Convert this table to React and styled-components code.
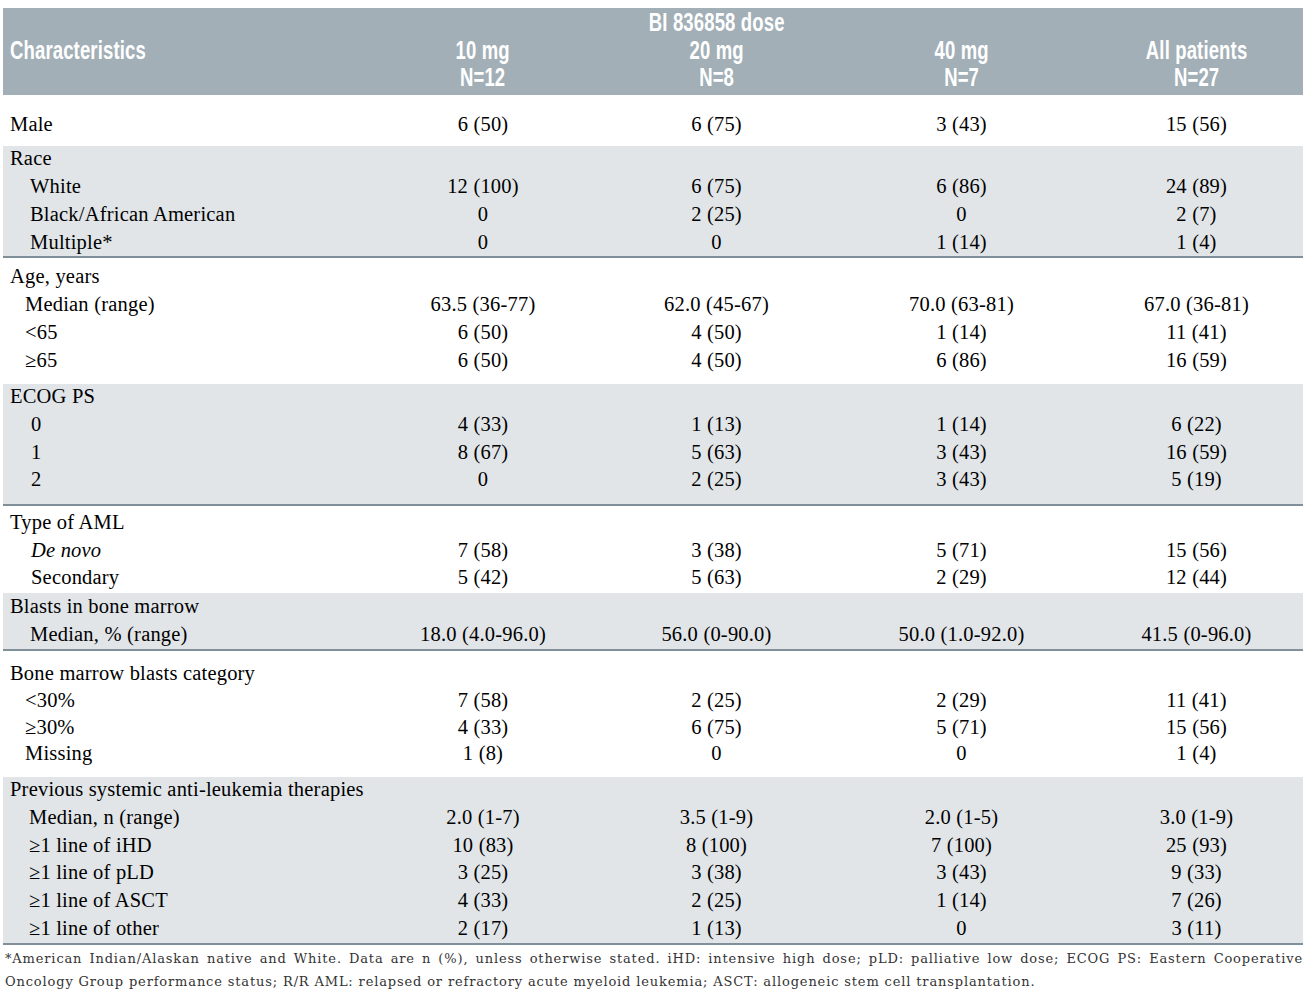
import React from "react";
import styled, { createGlobalStyle } from "styled-components";

const GlobalStyle = createGlobalStyle`
  html, body {
    margin: 0;
    padding: 0;
    background: #fff;
  }
`;

const COLS = "363px 234px 233px 257px 213px";

const Page = styled.div`
  width: 1300px;
  margin: 8px 0 0 3px;
  font-family: "Liberation Serif", "Times New Roman", serif;
  color: #000;
`;

const Head = styled.div`
  display: grid;
  grid-template-columns: ${COLS};
  grid-template-rows: repeat(3, 27.5px);
  height: 87px;
  box-sizing: border-box;
  padding-top: 1px;
  background: #a2afb7;
  color: #fff;
  font-family: "Liberation Sans Narrow", "Arial Narrow", "Liberation Sans", sans-serif;
  font-weight: bold;
  font-size: 25px;
  line-height: 27.5px;
`;

const HeadCell = styled.div`
  grid-column: ${(p) => p.$col + 1};
  grid-row: ${(p) => p.$row};
  text-align: ${(p) => (p.$col === 0 ? "left" : "center")};
  padding-left: ${(p) => (p.$col === 0 ? "7px" : "0")};
  white-space: nowrap;
`;

/* the installed sans has no condensed cut, so squeeze it to the narrow face */
const Narrow = styled.span`
  display: inline-block;
  transform: scaleX(0.74);
  transform-origin: ${(p) => (p.$left ? "left" : "center")} center;
  letter-spacing: 0.2px;
`;

const Group = styled.div`
  height: ${(p) => p.$h}px;
  box-sizing: border-box;
  padding-top: ${(p) => p.$pt}px;
  background: ${(p) => (p.$shade ? "#e1e5e8" : "#fff")};
  border-bottom: ${(p) => (p.$shade ? "2px solid #7f909b" : "none")};
  overflow: hidden;
`;

const Row = styled.div`
  display: grid;
  grid-template-columns: ${COLS};
  height: ${(p) => p.$pitch}px;
  font-size: 20.5px;
  line-height: 24px;
  letter-spacing: 0.2px;
`;

const Label = styled.div`
  padding-left: ${(p) => 7 + p.$indent}px;
  font-style: ${(p) => (p.$italic ? "italic" : "normal")};
  white-space: nowrap;
`;

const Value = styled.div`
  text-align: center;
  white-space: nowrap;
`;

const Note = styled.p`
  margin: 0;
  padding: 3px 0 0 2px;
  font-family: "DejaVu Serif", serif;
  font-size: 13px;
  letter-spacing: 0.85px;
  line-height: 22.7px;
  color: #333;
  text-align: justify;
`;

const groups = [
  {
    h: 51, pt: 17, pitch: 28,
    rows: [{ label: "Male", vals: ["6 (50)", "6 (75)", "3 (43)", "15 (56)"] }],
  },
  {
    shade: true, h: 112, pt: 0, pitch: 28, indent: 20,
    rows: [
      { label: "Race", top: true },
      { label: "White", vals: ["12 (100)", "6 (75)", "6 (86)", "24 (89)"] },
      { label: "Black/African American", vals: ["0", "2 (25)", "0", "2 (7)"] },
      { label: "Multiple*", vals: ["0", "0", "1 (14)", "1 (4)"] },
    ],
  },
  {
    h: 126, pt: 6, pitch: 28, indent: 15,
    rows: [
      { label: "Age, years", top: true },
      { label: "Median (range)", vals: ["63.5 (36-77)", "62.0 (45-67)", "70.0 (63-81)", "67.0 (36-81)"] },
      { label: "<65", vals: ["6 (50)", "4 (50)", "1 (14)", "11 (41)"] },
      { label: "≥65", vals: ["6 (50)", "4 (50)", "6 (86)", "16 (59)"] },
    ],
  },
  {
    shade: true, h: 122, pt: 0, pitch: 27.8, indent: 21,
    rows: [
      { label: "ECOG PS", top: true },
      { label: "0", vals: ["4 (33)", "1 (13)", "1 (14)", "6 (22)"] },
      { label: "1", vals: ["8 (67)", "5 (63)", "3 (43)", "16 (59)"] },
      { label: "2", vals: ["0", "2 (25)", "3 (43)", "5 (19)"] },
    ],
  },
  {
    h: 87, pt: 4, pitch: 27.5, indent: 21,
    rows: [
      { label: "Type of AML", top: true },
      { label: "De novo", italic: true, vals: ["7 (58)", "3 (38)", "5 (71)", "15 (56)"] },
      { label: "Secondary", vals: ["5 (42)", "5 (63)", "2 (29)", "12 (44)"] },
    ],
  },
  {
    shade: true, h: 58, pt: 1, pitch: 27.7, indent: 20,
    rows: [
      { label: "Blasts in bone marrow", top: true },
      { label: "Median, % (range)", vals: ["18.0 (4.0-96.0)", "56.0 (0-90.0)", "50.0 (1.0-92.0)", "41.5 (0-96.0)"] },
    ],
  },
  {
    h: 126, pt: 10, pitch: 26.8, indent: 15,
    rows: [
      { label: "Bone marrow blasts category", top: true },
      { label: "<30%", vals: ["7 (58)", "2 (25)", "2 (29)", "11 (41)"] },
      { label: "≥30%", vals: ["4 (33)", "6 (75)", "5 (71)", "15 (56)"] },
      { label: "Missing", vals: ["1 (8)", "0", "0", "1 (4)"] },
    ],
  },
  {
    shade: true, h: 168, pt: 0, pitch: 27.8, indent: 19,
    rows: [
      { label: "Previous systemic anti-leukemia therapies", top: true },
      { label: "Median, n (range)", vals: ["2.0 (1-7)", "3.5 (1-9)", "2.0 (1-5)", "3.0 (1-9)"] },
      { label: "≥1 line of iHD", vals: ["10 (83)", "8 (100)", "7 (100)", "25 (93)"] },
      { label: "≥1 line of pLD", vals: ["3 (25)", "3 (38)", "3 (43)", "9 (33)"] },
      { label: "≥1 line of ASCT", vals: ["4 (33)", "2 (25)", "1 (14)", "7 (26)"] },
      { label: "≥1 line of other", vals: ["2 (17)", "1 (13)", "0", "3 (11)"] },
    ],
  },
];

const headCells = [
  { col: 2, row: 1, text: "BI 836858 dose" },
  { col: 0, row: 2, text: "Characteristics" },
  { col: 1, row: 2, text: "10 mg" },
  { col: 1, row: 3, text: "N=12" },
  { col: 2, row: 2, text: "20 mg" },
  { col: 2, row: 3, text: "N=8" },
  { col: 3, row: 2, text: "40 mg" },
  { col: 3, row: 3, text: "N=7" },
  { col: 4, row: 2, text: "All patients" },
  { col: 4, row: 3, text: "N=27" },
];

function TableHead() {
  return (
    <Head>
      {headCells.map((c) => (
        <HeadCell key={c.text} $col={c.col} $row={c.row}>
          <Narrow $left={c.col === 0}>{c.text}</Narrow>
        </HeadCell>
      ))}
    </Head>
  );
}

export default function App() {
  return (
    <>
      <GlobalStyle />
      <Page>
        <TableHead />
        {groups.map((g, i) => (
          <Group key={i} $shade={g.shade} $h={g.h} $pt={g.pt}>
            {g.rows.map((r, j) => (
              <Row key={j} $pitch={g.pitch}>
                <Label $indent={r.top || !g.indent ? 0 : g.indent} $italic={r.italic}>
                  {r.label}
                </Label>
                {(r.vals || []).map((v, k) => (
                  <Value key={k}>{v}</Value>
                ))}
              </Row>
            ))}
          </Group>
        ))}
        <Note>
          *American Indian/Alaskan native and White. Data are n (%), unless otherwise stated. iHD: intensive high dose; pLD: palliative low dose; ECOG PS: Eastern Cooperative Oncology Group performance status; R/R AML: relapsed or refractory acute myeloid leukemia; ASCT: allogeneic stem cell transplantation.
        </Note>
      </Page>
    </>
  );
}
